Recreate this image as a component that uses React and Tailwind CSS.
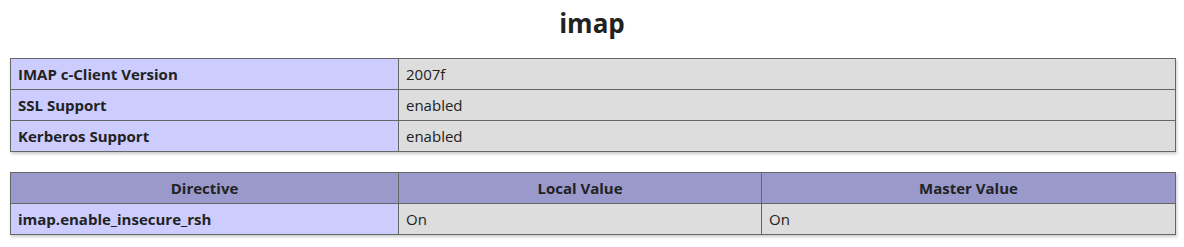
import React from 'react';

const info = [
  ['IMAP c-Client Version', '2007f'],
  ['SSL Support', 'enabled'],
  ['Kerberos Support', 'enabled'],
];

export default function App() {
  return (
    <div className="min-h-[247px] bg-white px-[10px] text-[15px] text-[#222] font-['Open_Sans','Noto_Sans',sans-serif]">
      <h2 className="flex h-[46px] items-center justify-center text-[26px] font-bold text-[#222]">imap</h2>

      <table className="mt-[12px] w-[1166px] border-collapse shadow-[1px_2px_3px_#ccc]">
        <tbody>
          {info.map(([k, v]) => (
            <tr key={k} className="h-[31px]">
              <td className="w-[388px] border border-[#666] bg-[#ccf] px-[7px] py-0 font-bold">{k}</td>
              <td className="border border-[#666] bg-[#ddd] px-[7px] py-0">{v}</td>
            </tr>
          ))}
        </tbody>
      </table>

      <table className="mt-[20px] w-[1166px] border-collapse shadow-[1px_2px_3px_#ccc]">
        <thead>
          <tr className="h-[31px]">
            <th className="w-[388px] border border-[#666] bg-[#99c] py-0 font-bold">Directive</th>
            <th className="w-[363px] border border-[#666] bg-[#99c] py-0 font-bold">Local Value</th>
            <th className="border border-[#666] bg-[#99c] py-0 font-bold">Master Value</th>
          </tr>
        </thead>
        <tbody>
          <tr className="h-[31px]">
            <td className="border border-[#666] bg-[#ccf] px-[7px] py-0 font-bold">imap.enable_insecure_rsh</td>
            <td className="border border-[#666] bg-[#ddd] px-[7px] py-0">On</td>
            <td className="border border-[#666] bg-[#ddd] px-[7px] py-0">On</td>
          </tr>
        </tbody>
      </table>
    </div>
  );
}
